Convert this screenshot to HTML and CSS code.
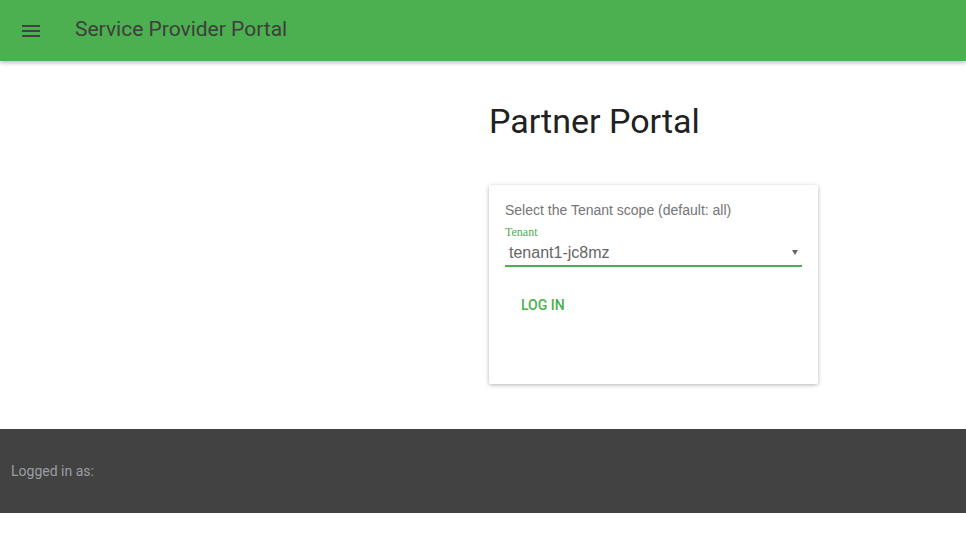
FILE: index.html
```html
<!DOCTYPE html>
<html>
<head>
<meta charset="utf-8">
<link rel="stylesheet" href="styles.css">
</head>
<body>
<header class="appbar">
  <button class="menu-btn" aria-label="menu">
    <svg width="18" height="12" viewBox="0 0 18 12"><rect x="0" y="0" width="18" height="2" fill="#424242"/><rect x="0" y="5" width="18" height="2" fill="#424242"/><rect x="0" y="10" width="18" height="2" fill="#424242"/></svg>
  </button>
  <div class="appbar-title">Service Provider Portal</div>
</header>
<main class="main">
  <div class="left"></div>
  <div class="right">
    <h1 class="page-title">Partner Portal</h1>
    <div class="card">
      <div class="scope-text">Select the Tenant scope (default: all)</div>
      <div class="field">
        <label class="field-label">Tenant</label>
        <div class="select">
          <span class="select-value">tenant1-jc8mz</span>
          <span class="select-arrow"></span>
        </div>
      </div>
      <button class="login-btn">LOG IN</button>
    </div>
  </div>
</main>
<footer class="footer">
  <span class="footer-text">Logged in as:</span>
</footer>
</body>
</html>
```
FILE: styles.css
```css
html, body {
  margin: 0;
  padding: 0;
  background: #fff;
}
body {
  font-family: Roboto, "Liberation Sans", sans-serif;
}
.appbar {
  height: 61px;
  background: #4caf50;
  display: flex;
  align-items: center;
  box-shadow: 0 2px 4px rgba(0,0,0,0.25);
  position: relative;
  z-index: 2;
}
.menu-btn {
  border: 0;
  background: transparent;
  padding: 0;
  margin-left: 22px;
  width: 18px;
  height: 12px;
  display: flex;
  margin-top: 1px;
}
.appbar-title {
  margin-left: 35px;
  margin-bottom: 3px;
  font-size: 21px;
  color: #3e3e3e;
}
.main {
  height: 368px;
  display: grid;
  grid-template-columns: 489px 1fr;
}
.right {
  display: flex;
  flex-direction: column;
}
.page-title {
  margin: 40px 0 0 0;
  font-size: 34px;
  font-weight: 400;
  color: #212121;
  line-height: 40px;
}
.card {
  margin-top: 44px;
  width: 329px;
  height: 199px;
  box-sizing: border-box;
  padding: 17px 16px 0 16px;
  box-shadow: 0 1px 4px rgba(0,0,0,0.3);
  border-radius: 2px;
  display: flex;
  flex-direction: column;
}
.scope-text {
  font-family: "Liberation Sans", Arial, sans-serif;
  font-size: 14px;
  color: #757575;
  line-height: 16px;
}
.field {
  margin-top: 7px;
  display: flex;
  flex-direction: column;
}
.field-label {
  font-family: "Liberation Serif", serif;
  font-size: 12px;
  color: #4caf50;
  line-height: 14px;
}
.select {
  display: flex;
  align-items: center;
  justify-content: space-between;
  height: 26px;
  border-bottom: 2px solid #4caf50;
  padding: 0 4px 0 4px;
}
.select-value {
  font-family: "Liberation Sans", Arial, sans-serif;
  font-size: 16px;
  color: #666;
  margin-top: 2px;
}
.select-arrow {
  width: 0;
  height: 0;
  border-left: 3.5px solid transparent;
  border-right: 3.5px solid transparent;
  border-top: 5px solid #666;
  margin-top: 1px;
}
.login-btn {
  align-self: flex-start;
  margin-top: 24px;
  margin-left: 0;
  border: 0;
  background: transparent;
  font-family: Roboto, sans-serif;
  font-weight: 500;
  font-size: 14px;
  color: #4caf50;
  padding: 6px 16px;
  line-height: 16px;
}
.footer {
  height: 84px;
  background: #424242;
  display: flex;
  align-items: center;
  padding-left: 11px;
}
.footer-text {
  font-size: 14px;
  color: #9a9ea3;
}
```
